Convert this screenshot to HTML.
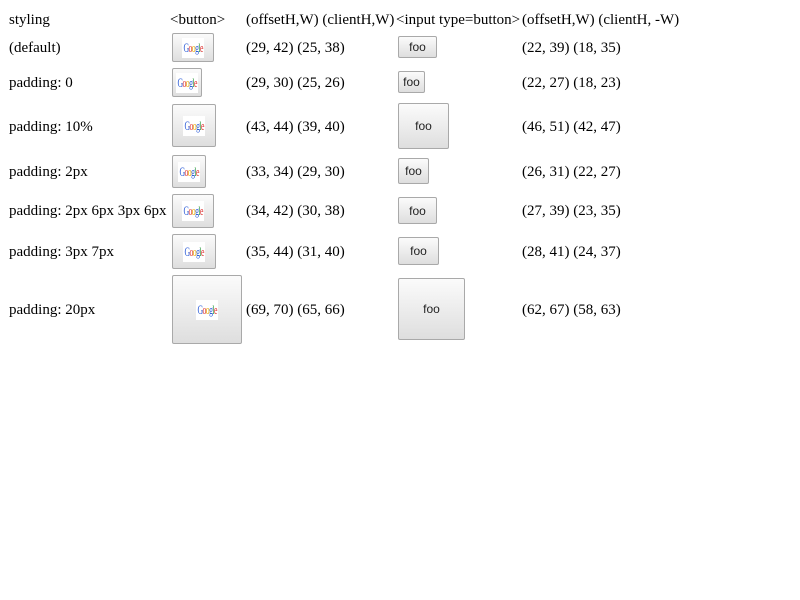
<!DOCTYPE html><html><head><style>
body{margin:0;background:#fff;font-family:"Liberation Serif",serif;font-size:15px;color:#000}
.t{position:absolute;white-space:nowrap;line-height:16px;transform:translateY(-50%);margin-top:1px}
.b{position:absolute;box-sizing:border-box;border:1px solid #a9a9a9;border-radius:2px;background:linear-gradient(#fbfbfb,#dedede);display:flex;align-items:center;justify-content:center}
.g{width:22px;height:20px;background:#fff;display:flex;align-items:center;justify-content:center;overflow:hidden}
.g i{font-style:normal;font-family:"Liberation Serif",serif;font-size:13px;letter-spacing:-1px;display:inline-block;transform:scaleX(.6);white-space:nowrap}
.g span:nth-child(1),.g span:nth-child(4){color:#2a5bd7}.g span:nth-child(2),.g span:nth-child(6){color:#d33}.g span:nth-child(3){color:#e6a800}.g span:nth-child(5){color:#2a9a3a}
.f{font-family:"Liberation Sans",sans-serif;font-size:12px;color:#222}
</style></head><body>
<div class="t" style="left:9px;top:19px">styling</div>
<div class="t" style="left:170px;top:19px">&lt;button&gt;</div>
<div class="t" style="left:246px;top:19px">(offsetH,W) (clientH,W)</div>
<div class="t" style="left:396px;top:19px">&lt;input type=button&gt;</div>
<div class="t" style="left:522px;top:19px">(offsetH,W) (clientH, -W)</div>

<div class="t" style="left:9px;top:47px">(default)</div>
<div class="b" style="left:172px;top:33px;width:42px;height:29px"><div class="g"><i><span>G</span><span>o</span><span>o</span><span>g</span><span>l</span><span>e</span></i></div></div>
<div class="t" style="left:246px;top:47px">(29, 42) (25, 38)</div>
<div class="b f" style="left:398px;top:36px;width:39px;height:22px">foo</div>
<div class="t" style="left:522px;top:47px">(22, 39) (18, 35)</div>

<div class="t" style="left:9px;top:82px">padding: 0</div>
<div class="b" style="left:172px;top:68px;width:30px;height:29px"><div class="g"><i><span>G</span><span>o</span><span>o</span><span>g</span><span>l</span><span>e</span></i></div></div>
<div class="t" style="left:246px;top:82px">(29, 30) (25, 26)</div>
<div class="b f" style="left:398px;top:71px;width:27px;height:22px">foo</div>
<div class="t" style="left:522px;top:82px">(22, 27) (18, 23)</div>

<div class="t" style="left:9px;top:126px">padding: 10%</div>
<div class="b" style="left:172px;top:104px;width:44px;height:43px"><div class="g"><i><span>G</span><span>o</span><span>o</span><span>g</span><span>l</span><span>e</span></i></div></div>
<div class="t" style="left:246px;top:126px">(43, 44) (39, 40)</div>
<div class="b f" style="left:398px;top:103px;width:51px;height:46px">foo</div>
<div class="t" style="left:522px;top:126px">(46, 51) (42, 47)</div>

<div class="t" style="left:9px;top:171px">padding: 2px</div>
<div class="b" style="left:172px;top:155px;width:34px;height:33px"><div class="g"><i><span>G</span><span>o</span><span>o</span><span>g</span><span>l</span><span>e</span></i></div></div>
<div class="t" style="left:246px;top:171px">(33, 34) (29, 30)</div>
<div class="b f" style="left:398px;top:158px;width:31px;height:26px">foo</div>
<div class="t" style="left:522px;top:171px">(26, 31) (22, 27)</div>

<div class="t" style="left:9px;top:210px">padding: 2px 6px 3px 6px</div>
<div class="b" style="left:172px;top:194px;width:42px;height:34px"><div class="g"><i><span>G</span><span>o</span><span>o</span><span>g</span><span>l</span><span>e</span></i></div></div>
<div class="t" style="left:246px;top:210px">(34, 42) (30, 38)</div>
<div class="b f" style="left:398px;top:197px;width:39px;height:27px">foo</div>
<div class="t" style="left:522px;top:210px">(27, 39) (23, 35)</div>

<div class="t" style="left:9px;top:251px">padding: 3px 7px</div>
<div class="b" style="left:172px;top:234px;width:44px;height:35px"><div class="g"><i><span>G</span><span>o</span><span>o</span><span>g</span><span>l</span><span>e</span></i></div></div>
<div class="t" style="left:246px;top:251px">(35, 44) (31, 40)</div>
<div class="b f" style="left:398px;top:237px;width:41px;height:28px">foo</div>
<div class="t" style="left:522px;top:251px">(28, 41) (24, 37)</div>

<div class="t" style="left:9px;top:309px">padding: 20px</div>
<div class="b" style="left:172px;top:275px;width:70px;height:69px"><div class="g"><i><span>G</span><span>o</span><span>o</span><span>g</span><span>l</span><span>e</span></i></div></div>
<div class="t" style="left:246px;top:309px">(69, 70) (65, 66)</div>
<div class="b f" style="left:398px;top:278px;width:67px;height:62px">foo</div>
<div class="t" style="left:522px;top:309px">(62, 67) (58, 63)</div>
</body></html>
